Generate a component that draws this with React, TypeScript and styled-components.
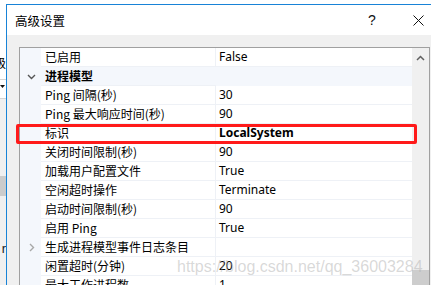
import React from "react";
import styled, { createGlobalStyle } from "styled-components";

interface Prop {
  name: string;
  value?: string;
  category?: boolean;
  collapsed?: boolean;
  bold?: boolean;
  marked?: boolean;
}

const props: Prop[] = [
  { name: "已启用", value: "False" },
  { name: "进程模型", category: true },
  { name: "Ping 间隔(秒)", value: "30" },
  { name: "Ping 最大响应时间(秒)", value: "90" },
  { name: "标识", value: "LocalSystem", bold: true, marked: true },
  { name: "关闭时间限制(秒)", value: "90" },
  { name: "加载用户配置文件", value: "True" },
  { name: "空闲超时操作", value: "Terminate" },
  { name: "启动时间限制(秒)", value: "90" },
  { name: "启用 Ping", value: "True" },
  { name: "生成进程模型事件日志条目", value: "", collapsed: true },
  { name: "闲置超时(分钟)", value: "20" },
  { name: "最大工作进程数", value: "1" },
];

const GlobalStyle = createGlobalStyle`
  html, body {
    margin: 0;
    padding: 0;
    background: #fff;
    overflow: hidden;
  }
  body {
    font-family: "Noto Sans CJK SC", "Noto Sans", sans-serif;
  }
`;

const Page = styled.div`
  position: relative;
  width: 431px;
  height: 285px;
  overflow: hidden;
  display: flex;
  background: #fff;
`;

const BackWindow = styled.div`
  width: 6px;
  flex: none;
  display: flex;
  flex-direction: column;
  overflow: hidden;
`;

const BackTop = styled.div`
  height: 80px;
  background: #fff;
  display: flex;
  justify-content: flex-end;
  align-items: flex-start;
  padding-top: 55px;
  box-sizing: border-box;
  border-bottom: 1px solid #d5d5d5;
  font-size: 12px;
  line-height: 16px;
  color: #000;
  white-space: nowrap;
`;

const BackCombo = styled.div`
  height: 19px;
  background: #fff;
  border-bottom: 1px solid #d5d5d5;
  display: flex;
  justify-content: flex-end;
  align-items: flex-start;
  padding-top: 5px;
  box-sizing: border-box;
  padding-right: 1px;
`;

const BackList = styled.div`
  flex: 1;
  background: #f0f0f0;
  display: flex;
  flex-direction: column;
  padding-top: 77px;
`;

const BackSelected = styled.div`
  height: 20px;
  background: #cccccc;
`;

const BackLabel = styled.div`
  margin-top: 45px;
  display: flex;
  justify-content: flex-end;
  font-family: "Liberation Sans", sans-serif;
  font-size: 13px;
  line-height: 16px;
  color: #1a1a1a;
  white-space: nowrap;
`;

const Dialog = styled.div`
  flex: none;
  width: 434px;
  margin-top: 4px;
  border-left: 1px solid #1883d7;
  border-top: 1px solid #1883d7;
  display: flex;
  flex-direction: column;
`;

const TitleBar = styled.div`
  height: 30px;
  background: #fff;
  display: flex;
  align-items: center;
  padding-left: 8px;
`;

const Title = styled.div`
  font-size: 12.5px;
  color: #000;
  flex: 1;
`;

const CaptionButton = styled.div`
  width: 46px;
  height: 30px;
  display: flex;
  align-items: center;
  justify-content: center;
  font-family: "Liberation Sans", sans-serif;
  font-size: 14px;
  color: #111;
`;

const Body = styled.div`
  flex: 1;
  background: #f0f0f0;
  padding: 12px 11px 0 12px;
`;

const Grid = styled.div`
  border: 1px solid #a0a0a0;
  border-bottom: none;
  height: 100%;
  display: flex;
  background: #fff;
`;

const Rows = styled.div`
  flex: 1;
  display: flex;
  flex-direction: column;
`;

const Row = styled.div<{ $category?: boolean }>`
  position: relative;
  display: flex;
  height: 19px;
  flex: none;
  background: ${(p) => (p.$category ? "#f4f7fc" : "#fff")};
`;

const Gutter = styled.div`
  width: 21px;
  flex: none;
  background: #f4f7fc;
  display: flex;
  align-items: center;
  justify-content: center;
  padding-left: 2px;
  box-sizing: border-box;
`;

const NameCell = styled.div<{ $category?: boolean }>`
  width: 175px;
  flex: none;
  box-sizing: border-box;
  padding-left: 4px;
  border-bottom: 1px solid #eef1f6;
  border-right: ${(p) => (p.$category ? "none" : "1px solid #eef1f6")};
  font-size: 12px;
  line-height: 18px;
  font-weight: ${(p) => (p.$category ? 700 : 400)};
  color: #000;
  white-space: nowrap;
  overflow: hidden;
`;

const ValueCell = styled.div<{ $bold?: boolean }>`
  flex: 1;
  box-sizing: border-box;
  padding-left: 3px;
  border-bottom: 1px solid #eef1f6;
  font-family: "Noto Sans", sans-serif;
  font-size: 12px;
  line-height: 18px;
  font-weight: ${(p) => (p.$bold ? 700 : 400)};
  color: #000;
  white-space: nowrap;
`;

const Marker = styled.div`
  position: absolute;
  left: -4px;
  right: -5px;
  top: 0;
  height: 20px;
  box-sizing: border-box;
  border: 3px solid #ff1a1a;
  border-radius: 2px;
  z-index: 2;
`;

const ScrollBar = styled.div`
  width: 17px;
  flex: none;
  background: #f0f0f0;
  display: flex;
  flex-direction: column;
  align-items: center;
`;

const ScrollArrow = styled.div`
  height: 17px;
  display: flex;
  align-items: center;
  justify-content: center;
  margin-top: 1px;
`;

const ScrollTrack = styled.div`
  flex: 1;
  width: 100%;
  display: flex;
  flex-direction: column;
`;

const ScrollThumb = styled.div`
  margin-top: 204px;
  height: 40px;
  width: 100%;
  background: #cdcdcd;
`;

const Watermark = styled.div`
  position: absolute;
  left: 177px;
  top: 258px;
  font-family: "Liberation Sans", sans-serif;
  font-size: 16px;
  line-height: 18px;
  color: rgba(170, 170, 170, 0.45);
  white-space: nowrap;
  z-index: 3;
  pointer-events: none;
`;

const Chevron: React.FC<{ down?: boolean; color: string }> = ({ down, color }) => (
  <svg width="9" height="9" viewBox="0 0 9 9">
    <polyline
      points={down ? "1,3 4.5,6.5 8,3" : "3,1 6.5,4.5 3,8"}
      fill="none"
      stroke={color}
      strokeWidth="1.4"
    />
  </svg>
);

const App: React.FC = () => {
  return (
    <Page>
      <GlobalStyle />
      <BackWindow>
        <BackTop>级</BackTop>
        <BackCombo>
          <svg width="5" height="3" viewBox="0 0 5 3">
            <polygon points="0,0 5,0 2.5,3" fill="#111" />
          </svg>
        </BackCombo>
        <BackList>
          <BackSelected />
          <BackLabel>r</BackLabel>
        </BackList>
      </BackWindow>
      <Dialog>
        <TitleBar>
          <Title>高级设置</Title>
          <CaptionButton>?</CaptionButton>
          <CaptionButton>
            <svg width="11" height="11" viewBox="0 0 11 11">
              <path d="M0.5 0.5 L10.5 10.5 M10.5 0.5 L0.5 10.5" stroke="#111" strokeWidth="1" />
            </svg>
          </CaptionButton>
        </TitleBar>
        <Body>
          <Grid>
            <Rows>
              {props.map((p) => (
                <Row key={p.name} $category={p.category}>
                  <Gutter>
                    {p.category && <Chevron down color="#555" />}
                    {p.collapsed && <Chevron color="#a8a8a8" />}
                  </Gutter>
                  <NameCell $category={p.category}>{p.name}</NameCell>
                  {!p.category && <ValueCell $bold={p.bold}>{p.value}</ValueCell>}
                  {p.marked && <Marker />}
                </Row>
              ))}
            </Rows>
            <ScrollBar>
              <ScrollArrow>
                <svg width="9" height="6" viewBox="0 0 9 6">
                  <polyline points="1,5 4.5,1.5 8,5" fill="none" stroke="#606060" strokeWidth="1.5" />
                </svg>
              </ScrollArrow>
              <ScrollTrack>
                <ScrollThumb />
              </ScrollTrack>
            </ScrollBar>
          </Grid>
        </Body>
      </Dialog>
      <Watermark>https://blog.csdn.net/qq_36003284</Watermark>
    </Page>
  );
};

export default App;
